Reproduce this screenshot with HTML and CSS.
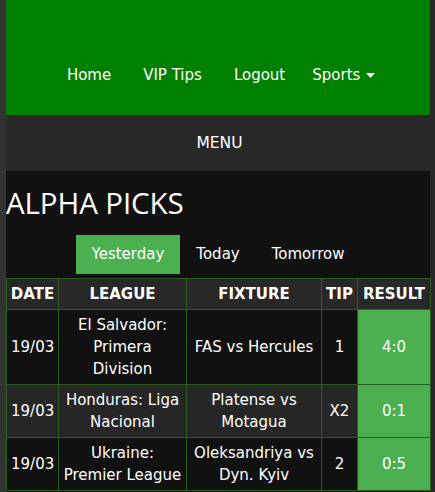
FILE: index.html
```html
<!DOCTYPE html>
<html>
<head>
<meta charset="utf-8">
<link rel="stylesheet" href="styles.css">
</head>
<body>
<div class="page">
  <header class="topbar">
    <nav class="nav">
      <a class="nav-link">Home</a>
      <a class="nav-link">VIP Tips</a>
      <a class="nav-link">Logout</a>
      <a class="nav-link sports">Sports <svg class="caret" width="9" height="5" viewBox="0 0 9 5"><path d="M0 0H9L4.5 5Z" fill="#fff"/></svg></a>
    </nav>
  </header>
  <div class="menubar">MENU</div>
  <main class="content">
    <h1 class="title">ALPHA PICKS</h1>
    <div class="tabs">
      <a class="tab active">Yesterday</a>
      <a class="tab">Today</a>
      <a class="tab">Tomorrow</a>
    </div>
    <table class="picks">
      <colgroup>
        <col class="c-date"><col class="c-league"><col class="c-fixture"><col class="c-tip"><col class="c-result">
      </colgroup>
      <thead>
        <tr><th>DATE</th><th>LEAGUE</th><th>FIXTURE</th><th>TIP</th><th>RESULT</th></tr>
      </thead>
      <tbody>
        <tr><td>19/03</td><td>El Salvador: Primera Division</td><td>FAS vs Hercules</td><td>1</td><td class="win">4:0</td></tr>
        <tr class="alt"><td>19/03</td><td>Honduras: Liga Nacional</td><td>Platense vs Motagua</td><td>X2</td><td class="win">0:1</td></tr>
        <tr><td>19/03</td><td>Ukraine: Premier League</td><td>Oleksandriya vs Dyn. Kyiv</td><td>2</td><td class="win">0:5</td></tr>
      </tbody>
    </table>
  </main>
</div>
</body>
</html>
```

FILE: styles.css
```css
html, body {
  margin: 0;
  padding: 0;
}
body {
  background: #282828;
  border-left: 6px solid #333333;
  min-height: 492px;
  font-family: "DejaVu Sans", Verdana, sans-serif;
  color: #ffffff;
}
.page {
  width: 429px;
}
.topbar {
  width: 424px;
  height: 115px;
  background: #008000;
  box-sizing: border-box;
  padding-top: 64px;
}
.nav {
  display: flex;
  justify-content: center;
}
.nav-link {
  font-size: 15px;
  line-height: 22px;
  padding: 0 16px;
  color: #ffffff;
  white-space: nowrap;
}
.nav-link.sports {
  padding: 0 10px 0 11px;
}
.caret {
  vertical-align: 2px;
  margin-left: 1px;
}
.menubar {
  background: #282828;
  text-align: center;
  font-size: 15.5px;
  line-height: 22px;
  padding: 17px 0;
  width: 427px;
}
.content {
  width: 424px;
  background: #111111;
  padding: 12px 0 4px;
  min-height: 305px;
  box-sizing: border-box;
}
.title {
  font-family: "Open Sans", sans-serif;
  font-weight: normal;
  font-size: 29.5px;
  line-height: 40px;
  margin: 0;
  letter-spacing: -0.1px;
}
.tabs {
  display: flex;
  justify-content: center;
  margin-top: 12px;
}
.tab {
  font-size: 15px;
  line-height: 19px;
  padding: 10px 16px;
  color: #ffffff;
}
.tab.active {
  background: #4caf50;
}
.picks {
  margin-top: 4px;
  width: 424px;
  table-layout: fixed;
  border-collapse: collapse;
}
.c-date { width: 52px; }
.c-league { width: 128px; }
.c-fixture { width: 135px; }
.c-tip { width: 36px; }
.c-result { width: 73px; }
.picks th, .picks td {
  border: 1px solid #2b5d1f;
  padding: 4px;
  text-align: center;
  line-height: 22px;
}
.picks th {
  background: #282828;
  font-size: 15px;
  font-weight: bold;
  padding: 4px 1px;
}
.picks td {
  font-size: 15px;
  background: #111111;
}
.picks tr.alt td {
  background: #262626;
}
.picks td.win, .picks tr.alt td.win {
  background: #4caf50;
}
```
